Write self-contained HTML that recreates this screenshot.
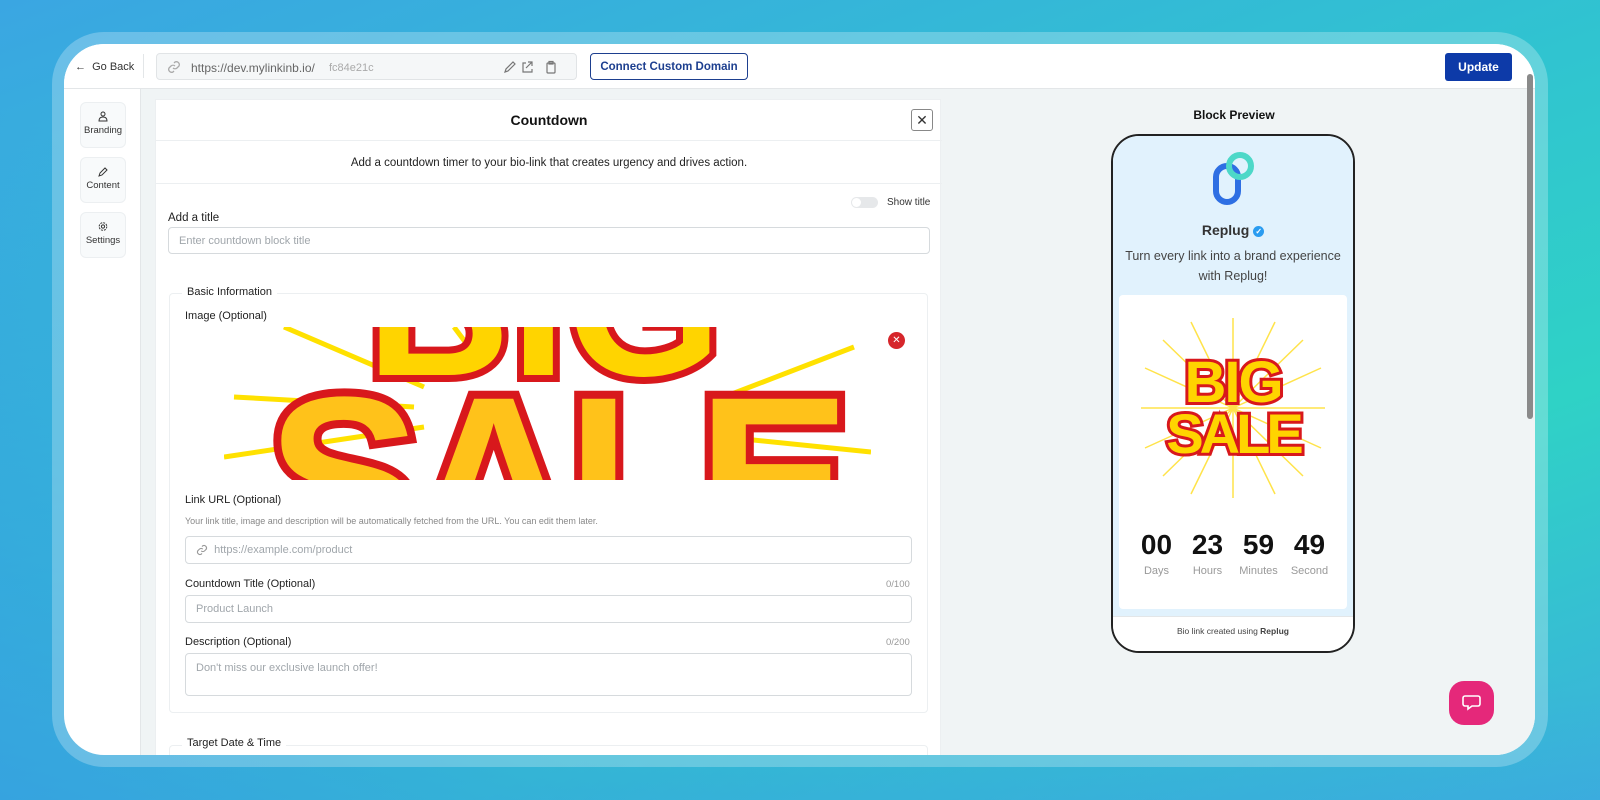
<!DOCTYPE html>
<html><head><meta charset="utf-8"><style>
*{box-sizing:border-box;margin:0;padding:0}
body{width:1600px;height:800px;overflow:hidden;font-family:"Liberation Sans",sans-serif;position:relative;
background:linear-gradient(160deg,#3aa6e2 0%,#30c4d0 45%,#2fd2c6 70%,#3bb0dc 100%);}
.bg2{position:absolute;inset:0;background:linear-gradient(20deg,rgba(60,130,240,.55) 0%,rgba(60,130,240,0) 50%);}
.band{position:absolute;left:52px;top:32px;width:1496px;height:735px;border-radius:52px;background:rgba(255,255,255,.25)}
.win{position:absolute;left:64px;top:44px;width:1471px;height:711px;border-radius:40px;background:#fff;overflow:hidden}
.abs{position:absolute}
.top{left:0;top:0;width:1471px;height:45px;border-bottom:1px solid #e3e6e8;background:#fff}
.main{left:76px;top:45px;width:1395px;height:666px;background:#f0f4f5;border-left:1px solid #e3e6e8}
.side{border:1px solid #eceff1;background:#f8fafb;border-radius:6px;width:46px;height:46px;font-size:9.5px;color:#333;text-align:center;padding-top:8px}
.lbl{font-size:11.5px;color:#222}
.inp{border:1px solid #d6dadd;border-radius:4px;background:#fff;font-size:11px;color:#a0a6ab;padding-left:10px;display:flex;align-items:center}
.small{font-size:9.5px;color:#999}
</style></head><body>
<div class="bg2"></div>
<div class="band"></div>
<div class="win">
 <div class="abs top">
  <div class="abs" style="left:11px;top:17px;font-size:11px;color:#333">&#8592;&nbsp; Go Back</div>
  <div class="abs" style="left:79px;top:10px;width:1px;height:24px;background:#e3e6e8"></div>
  <div class="abs" style="left:92px;top:9px;width:421px;height:27px;border:1px solid #e1e4e6;border-radius:4px;background:#f5f7f8">
   <svg class="abs" style="left:10px;top:6px" width="14" height="14" viewBox="0 0 14 14" fill="none" stroke="#aaa" stroke-width="1.3"><path d="M6 8a3 3 0 004 0l2-2a3 3 0 00-4-4l-1 1M8 6a3 3 0 00-4 0L2 8a3 3 0 004 4l1-1"/></svg>
   <span class="abs" style="left:34px;top:7px;font-size:12px;color:#666">https://dev.mylinkinb.io/</span>
   <span class="abs" style="left:172px;top:8px;font-size:11px;color:#aaa">fc84e21c</span>
   <svg class="abs" style="left:346px;top:6px" width="60" height="14" viewBox="0 0 60 14" fill="none" stroke="#777" stroke-width="1.2"><path d="M2 12l1-3 7-7 2 2-7 7z"/><path d="M23 3h-3v9h9v-3M25 2h4v4M29 2l-6 6"/><rect x="44" y="3" width="8" height="10" rx="1"/><rect x="46" y="1.5" width="4" height="2.5"/></svg>
  </div>
  <div class="abs" style="left:526px;top:9px;width:158px;height:27px;border:1.5px solid #1d3f8f;border-radius:4px;font-size:11.5px;font-weight:bold;color:#1d3f8f;display:flex;align-items:center;justify-content:center">Connect Custom Domain</div>
  <div class="abs" style="left:1381px;top:9px;width:67px;height:28px;background:#0d3aa8;border-radius:3px;color:#fff;font-size:12px;font-weight:bold;text-align:center;line-height:28px">Update</div>
 </div>
 <div class="abs side" style="left:16px;top:58px"><svg width="10" height="11" viewBox="0 0 10 11" fill="none" stroke="#333"><circle cx="5" cy="3" r="2"/><path d="M1 10c0-3 2-4 4-4s4 1 4 4z"/></svg><br>Branding</div>
 <div class="abs side" style="left:16px;top:113px"><svg width="10" height="11" viewBox="0 0 10 11" fill="none" stroke="#333"><path d="M1 10l1-3 5-5 2 2-5 5z"/></svg><br>Content</div>
 <div class="abs side" style="left:16px;top:168px"><svg width="10" height="11" viewBox="0 0 10 10" fill="none" stroke="#333"><circle cx="5" cy="5" r="1.6"/><circle cx="5" cy="5" r="3.8" stroke-dasharray="2 1"/></svg><br>Settings</div>
 <div class="abs main">
  <div class="abs" style="left:14px;top:10px;width:786px;height:660px;background:#fff;border:1px solid #eceff1">
   <div class="abs" style="left:0;top:0;width:786px;height:41px;border-bottom:1px solid #eceff1;text-align:center;line-height:41px;font-size:14px;font-weight:bold;color:#111">Countdown</div>
   <div class="abs" style="left:755px;top:9px;width:22px;height:22px;border:1px solid #888;border-radius:3px;text-align:center;line-height:20px;font-size:14px;color:#333">&#10005;</div>
   <div class="abs" style="left:0;top:57px;width:786px;text-align:center;font-size:11.5px;color:#222">Add a countdown timer to your bio-link that creates urgency and drives action.</div>
   <div class="abs" style="left:0;top:83px;width:786px;border-top:1px solid #eceff1"></div>
   <div class="abs" style="left:695px;top:97px;width:27px;height:11px;border-radius:6px;background:#e6e8ea"><div style="width:9px;height:9px;border-radius:50%;background:#fff;margin:1px"></div></div>
   <div class="abs" style="left:731px;top:97px;font-size:10px;color:#333">Show title</div>
   <div class="abs lbl" style="left:12px;top:112px">Add a title</div>
   <div class="abs inp" style="left:12px;top:127px;width:762px;height:27px">Enter countdown block title</div>

   <div class="abs" style="left:13px;top:193px;width:759px;height:420px;border:1px solid #eceff1;border-radius:4px"></div>
   <div class="abs" style="left:26px;top:186px;background:#fff;padding:0 5px;font-size:11px;color:#222">Basic Information</div>
   <div class="abs lbl" style="left:29px;top:210px;font-size:11px">Image (Optional)</div>
   <svg class="abs" style="left:68px;top:227px" width="647" height="153" viewBox="0 0 647 153">
    <g stroke="#ffe100" stroke-width="5"><path d="M60 0L200 60M0 130L200 100M630 20L500 70M647 125L500 110M230 0L260 40M10 70L190 80"/></g>
    <text x="320" y="48" text-anchor="middle" font-family="Liberation Sans" font-weight="bold" font-size="200" fill="#ffd400" stroke="#d8181c" stroke-width="14" paint-order="stroke">BIG</text>
    <text x="330" y="230" text-anchor="middle" font-family="Liberation Sans" font-weight="bold" font-size="230" fill="#ffc21a" stroke="#d8181c" stroke-width="16" paint-order="stroke" letter-spacing="-10">SALE</text>
   </svg>
   <div class="abs" style="left:732px;top:232px;width:17px;height:17px;border-radius:50%;background:#d6262b;color:#fff;font-size:10px;text-align:center;line-height:17px">&#10005;</div>
   <div class="abs lbl" style="left:29px;top:394px;font-size:11px">Link URL (Optional)</div>
   <div class="abs" style="left:29px;top:416px;font-size:9px;color:#888">Your link title, image and description will be automatically fetched from the URL. You can edit them later.</div>
   <div class="abs inp" style="left:29px;top:436px;width:727px;height:28px"><svg width="12" height="12" viewBox="0 0 14 14" fill="none" stroke="#999" stroke-width="1.3"><path d="M6 8a3 3 0 004 0l2-2a3 3 0 00-4-4l-1 1M8 6a3 3 0 00-4 0L2 8a3 3 0 004 4l1-1"/></svg>&nbsp;&nbsp;https://example.com/product</div>
   <div class="abs lbl" style="left:29px;top:478px;font-size:11px">Countdown Title (Optional)</div>
   <div class="abs small" style="left:730px;top:479px">0/100</div>
   <div class="abs inp" style="left:29px;top:495px;width:727px;height:28px">Product Launch</div>
   <div class="abs lbl" style="left:29px;top:536px;font-size:11px">Description (Optional)</div>
   <div class="abs small" style="left:730px;top:537px">0/200</div>
   <div class="abs inp" style="left:29px;top:553px;width:727px;height:43px;align-items:flex-start;padding-top:8px">Don't miss our exclusive launch offer!</div>
   <div class="abs" style="left:13px;top:645px;width:759px;height:40px;border:1px solid #eceff1;border-radius:4px"></div>
   <div class="abs" style="left:26px;top:637px;background:#fff;padding:0 5px;font-size:11px;color:#222">Target Date &amp; Time</div>
  </div>

  <div class="abs" style="left:1043px;top:19px;width:100px;text-align:center;font-size:12px;font-weight:bold;color:#111">Block Preview</div>
  <div class="abs" style="left:970px;top:45px;width:244px;height:519px;border:2px solid #222;border-radius:28px;background:#fff;overflow:hidden">
   <div class="abs" style="left:0;top:0;width:240px;height:480px;background:#e1f2fd"></div>
   <svg class="abs" style="left:97px;top:14px" width="48" height="56" viewBox="0 0 48 56" fill="none"><rect x="6" y="16" width="22" height="36" rx="11" stroke="#2e6fe3" stroke-width="6"/><circle cx="30" cy="16" r="11" stroke="#4dd8c8" stroke-width="6"/></svg>
   <div class="abs" style="left:0;top:86px;width:240px;text-align:center;font-size:14px;font-weight:bold;color:#333">Replug <span style="display:inline-block;width:11px;height:11px;border-radius:50%;background:#2a9cf0;color:#fff;font-size:8px;line-height:11px;vertical-align:1px">&#10003;</span></div>
   <div class="abs" style="left:-6px;top:110px;width:252px;text-align:center;font-size:12.5px;line-height:20px;color:#444;white-space:nowrap">Turn every link into a brand experience<br>with Replug!</div>
   <div class="abs" style="left:6px;top:159px;width:228px;height:314px;background:#fff;border-radius:4px"></div>
   <svg class="abs" style="left:28px;top:182px" width="184" height="180" viewBox="0 0 184 180">
    <g stroke="#ffe34a" stroke-width="1.5"><path d="M92 0V180M0 90H184M22 22L162 158M162 22L22 158M50 4L134 176M134 4L50 176M4 50L180 130M180 50L4 130"/></g>
    <text x="92" y="84" text-anchor="middle" font-family="Liberation Sans" font-weight="bold" font-size="58" fill="#ffd400" stroke="#d8181c" stroke-width="6" paint-order="stroke" letter-spacing="-2">BIG</text>
    <text x="92" y="135" text-anchor="middle" font-family="Liberation Sans" font-weight="bold" font-size="56" fill="#ffd400" stroke="#d8181c" stroke-width="6" paint-order="stroke" letter-spacing="-4">SALE</text>
   </svg>
   <div class="abs" style="left:0;top:393px;width:240px;display:flex;justify-content:center;gap:5px">
    <div style="width:46px;text-align:center"><div style="font-size:28px;font-weight:bold;color:#111">00</div><div style="font-size:11px;color:#999;margin-top:4px">Days</div></div>
    <div style="width:46px;text-align:center"><div style="font-size:28px;font-weight:bold;color:#111">23</div><div style="font-size:11px;color:#999;margin-top:4px">Hours</div></div>
    <div style="width:46px;text-align:center"><div style="font-size:28px;font-weight:bold;color:#111">59</div><div style="font-size:11px;color:#999;margin-top:4px">Minutes</div></div>
    <div style="width:46px;text-align:center"><div style="font-size:28px;font-weight:bold;color:#111">49</div><div style="font-size:11px;color:#999;margin-top:4px">Second</div></div>
   </div>
   <div class="abs" style="left:0;top:480px;width:240px;height:40px;border-top:1px solid #e3e6e8;background:#fff;text-align:center;font-size:8.5px;color:#444;padding-top:9px">Bio link created using <b>Replug</b></div>
  </div>
  <div class="abs" style="left:1308px;top:592px;width:45px;height:44px;border-radius:15px;background:#e5287a"><svg style="margin:12px 0 0 12px" width="21" height="20" viewBox="0 0 21 20" fill="none" stroke="#fff" stroke-width="1.6"><path d="M4 3h13a2 2 0 012 2v6a2 2 0 01-2 2h-6l-4 3v-3H4a2 2 0 01-2-2V5a2 2 0 012-2z"/></svg></div>
 </div>
 <div class="abs" style="left:1463px;top:30px;width:6px;height:345px;border-radius:3px;background:#8a8a8a"></div>
</div>
</body></html>
